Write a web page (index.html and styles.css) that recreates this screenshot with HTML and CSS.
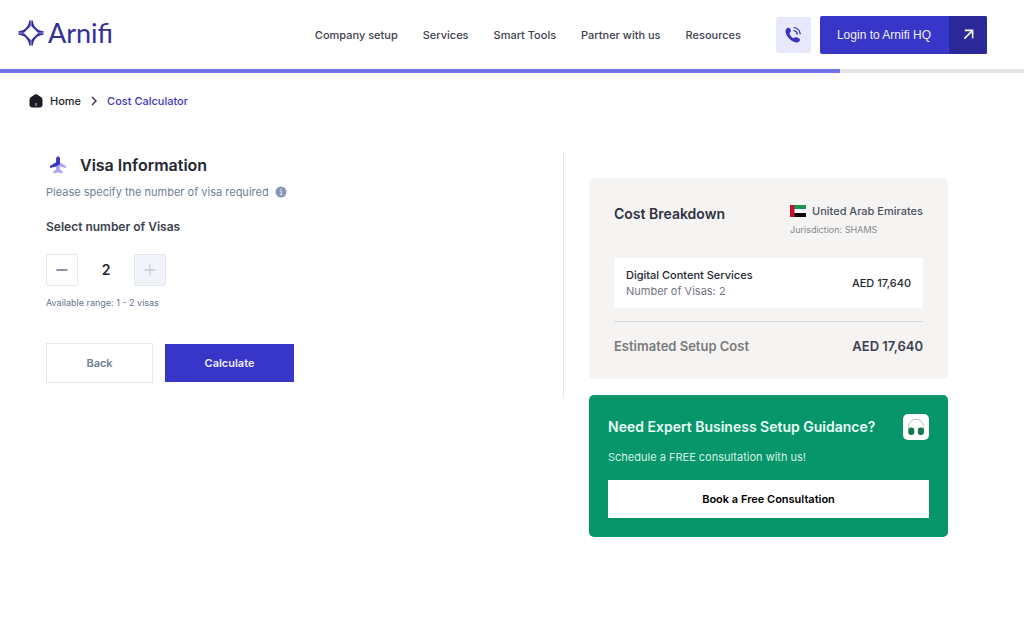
FILE: index.html
```html
<!DOCTYPE html>
<html lang="en">
<head>
<meta charset="utf-8">
<meta name="viewport" content="width=device-width, initial-scale=1">
<title>Arnifi Cost Calculator</title>
<link rel="stylesheet" href="styles.css">
</head>
<body>
<header class="header">
  <a class="logo" href="#" aria-label="Arnifi">
    <svg class="logo-mark" viewBox="0 0 26 26" aria-hidden="true">
      <g fill="#322f9c">
        <path id="ray" d="M12.700 0.500V6Q10.500 9.200 7 10.200L7.500 8.500Q10.500 6 11.200 0.500ZM13.300 0.500V6Q15.500 9.200 19 10.200L18.500 8.500Q15.500 6 14.800 0.500Z"/>
        <use href="#ray" transform="rotate(90 13 13)"/>
        <use href="#ray" transform="rotate(180 13 13)"/>
        <use href="#ray" transform="rotate(270 13 13)"/>
      </g>
    </svg>
    <span class="logo-text">Arnifi</span>
  </a>
  <nav class="nav" aria-label="Main">
    <a href="#">Company setup</a>
    <a href="#">Services</a>
    <a href="#">Smart Tools</a>
    <a href="#">Partner with us</a>
    <a href="#">Resources</a>
  </nav>
  <button class="call" type="button" aria-label="Call us">
    <svg viewBox="0 0 20 20" aria-hidden="true">
      <path d="M3.800 2.200 C5.500 1.300 6.800 2.200 7.400 4.300 C7.900 6 7.300 7.100 6 8 C6.700 10.500 8.500 12.700 10.700 13.700 C11.800 12.400 13 12.100 14.700 12.700 C17.500 13.600 18.500 15 17.300 16.600 C16 18.400 13.500 18.800 10.800 17.600 C6.500 15.700 3 11.600 1.900 7.600 C1.300 5.200 1.900 3.300 3.800 2.200Z" fill="#3936bd"/>
      <path d="M11.300 1.800 A7.500 7.500 0 0 1 18 8.700 M11 5.200 A4.200 4.200 0 0 1 14.700 9" fill="none" stroke="#3936bd" stroke-width="1.500" stroke-linecap="round"/>
    </svg>
  </button>
  <a class="login" href="#">
    <span class="login-text">Login to Arnifi HQ</span>
    <span class="login-arrow">
      <svg viewBox="0 0 12 12" aria-hidden="true"><path d="M2 1.500H10.500V10M10.500 1.500L1.500 10.500" fill="none" stroke="#fff" stroke-width="1.700"/></svg>
    </span>
  </a>
</header>
<div class="progress" role="progressbar" aria-label="Calculator progress" aria-valuenow="82" aria-valuemin="0" aria-valuemax="100"><div class="progress-bar" style="width:82%"></div></div>

<nav class="breadcrumb" aria-label="Breadcrumb">
  <a class="home" href="#">
    <svg viewBox="0 0 14 14" aria-hidden="true"><path d="M5.800 .6Q7 -.1 8.200 .6L12.200 3.200Q13.500 4.200 13.500 5.700V10.500Q13.500 13.500 10.500 13.500H3.500Q.5 13.500 .5 10.500V5.700Q.5 4.200 1.800 3.200Z" fill="#1b1c24"/><path d="M7 9.300V11.300" stroke="#d5d5dc" stroke-width="1" stroke-linecap="round"/></svg>
    Home
  </a>
  <svg class="chevron" viewBox="0 0 8 10" aria-hidden="true"><path d="M2 1L6 5L2 9" fill="none" stroke="#30313a" stroke-width="1.400"/></svg>
  <a class="current" href="#" aria-current="page">Cost Calculator</a>
</nav>

<main class="main">
  <section class="visa">
    <h1 class="visa-title">
      <svg viewBox="0 0 18 18" aria-hidden="true">
        <path d="M9 .5C10.200 .5 10.900 1.700 10.900 3V6.200L16.600 9.700Q17.300 10.500 17 12L10.900 10.600V13.500L13.500 15.500V17.500L9 16.200L4.500 17.500V15.500L7.100 13.500V10.500Z" fill="#aaa4ec"/>
        <path d="M9 .5C10.200 .5 10.900 1.700 10.900 3V8.300L7.100 10.600L1 12Q.7 10.500 1.400 9.700L7.100 6.200V3C7.100 1.700 7.800 .5 9 .5Z" fill="#3936bd"/>
      </svg>
      Visa Information
    </h1>
    <p class="visa-hint">Please specify the number of visa required
      <svg viewBox="0 0 12 12" aria-hidden="true"><circle cx="6" cy="6" r="5.500" fill="#8799b0"/><path d="M5 5.300H6.300V8.500M4.900 8.600H7.500M6 2.900V4.100" fill="none" stroke="#dfe6ee" stroke-width="1"/></svg>
    </p>
    <h2 class="visa-label" id="visa-label">Select number of Visas</h2>
    <div class="stepper" role="group" aria-labelledby="visa-label">
      <button class="step" type="button" aria-label="Decrease"><svg viewBox="0 0 14 14" aria-hidden="true"><path d="M1.500 7H12.500" stroke="#64748b" stroke-width="1.500"/></svg></button>
      <output class="count">2</output>
      <button class="step" type="button" aria-label="Increase" disabled><svg viewBox="0 0 14 14" aria-hidden="true"><path d="M1.500 7H12.500M7 1.500V12.500" stroke="#c3ccda" stroke-width="1.300"/></svg></button>
    </div>
    <p class="range">Available range: 1 - 2 visas</p>
    <div class="actions">
      <button class="back" type="button">Back</button>
      <button class="calculate" type="button">Calculate</button>
    </div>
  </section>

  <aside class="side">
    <section class="cost">
      <div class="cost-head">
        <h2 class="cost-title">Cost Breakdown</h2>
        <div>
          <p class="country">
            <svg viewBox="0 0 16 12" aria-hidden="true"><path fill="#fff" d="M0 0H16V12H0z"/><path fill="#159653" d="M0 0H16V4H0z"/><path fill="#080808" d="M0 8H16V12H0z"/><path fill="#c8102e" d="M0 0H4.500V12H0z"/></svg>
            United Arab Emirates
          </p>
          <p class="jurisdiction">Jurisdiction: SHAMS</p>
        </div>
      </div>
      <div class="item">
        <div>
          <h3 class="item-name">Digital Content Services</h3>
          <p class="item-detail">Number of Visas: 2</p>
        </div>
        <p class="item-price">AED 17,640</p>
      </div>
      <div class="total"><span class="total-label">Estimated Setup Cost</span><span>AED 17,640</span></div>
    </section>
    <section class="expert">
      <div class="expert-head">
        <h2 class="expert-title">Need Expert Business Setup Guidance?</h2>
        <svg viewBox="0 0 26 26" aria-hidden="true"><rect width="26" height="26" rx="5" fill="#fff"/><path d="M5.800 17V12.500A7.300 7.300 0 0 1 20.400 12.500V17" fill="none" stroke="#a9c9bb" stroke-width="1"/><rect x="5.300" y="13.500" width="6" height="7.500" rx="2.700" fill="#16784f"/><rect x="14.900" y="13.500" width="6" height="7.500" rx="2.700" fill="#16784f"/></svg>
      </div>
      <p class="expert-text">Schedule a FREE consultation with us!</p>
      <button class="book" type="button">Book a Free Consultation</button>
    </section>
  </aside>
</main>
</body>
</html>
```

FILE: styles.css
```css
* { box-sizing: border-box; }
body { margin: 0; background: #fff; color: #23262f; font: 500 11px/16px Inter, "Liberation Sans", sans-serif; }
h1, h2, h3, p { margin: 0; }
a { color: inherit; text-decoration: none; }
button { font: inherit; padding: 0; cursor: pointer; }
svg { display: block; flex: none; }

.header { display: flex; align-items: center; height: 69px; padding: 0 37px 0 18px; }
.logo { display: flex; align-items: center; gap: 4px; margin-right: auto; padding-bottom: 4px; color: #322f9c; }
.logo-mark { width: 26px; height: 26px; }
.logo-text { font: 400 27px/32px Lato, sans-serif; }
.nav { display: flex; gap: 25px; color: #41414f; }
.call { display: grid; place-items: center; width: 35px; height: 36px; margin: 0 9px 0 35px; border: 0; border-radius: 3px; background: #e8e8fc; }
.call svg { width: 18px; height: 18px; }
.login { display: flex; height: 38px; border-radius: 2px; overflow: hidden; background: #3835c9; color: #f0f0ff; }
.login-text { display: flex; align-items: center; padding: 0 18px 0 17px; font: 400 12px/16px "Liberation Sans", Arial, sans-serif; }
.login-arrow { display: grid; place-items: center; width: 38px; background: #2b2999; }
.login-arrow svg { width: 11px; height: 11px; }

.progress { height: 4px; background: #e5e5e9; }
.progress-bar { height: 100%; background: #7571ec; }

.breadcrumb { display: flex; align-items: center; gap: 9px; padding: 20px 29px 0; }
.home { display: flex; align-items: center; gap: 7px; }
.home svg { width: 14px; height: 14px; }
.chevron { width: 8px; height: 10px; }
.current { color: #3d39c0; }

.main { display: grid; grid-template-columns: 518px minmax(0, 1fr); padding: 44px 76px 24px 46px; }
.visa { border-right: 1px solid #e5e7eb; padding-bottom: 15px; align-self: start; }
.visa-title { display: flex; align-items: center; gap: 13px; padding-left: 3px; font-size: 16px; line-height: 24px; font-weight: 600; }
.visa-title svg { width: 18px; height: 18px; }
.visa-hint { display: flex; align-items: center; gap: 6px; margin-top: 7px; color: #718096; font-weight: 400; }
.visa-hint svg { width: 12px; height: 12px; }
.visa-label { margin-top: 17px; color: #3b4250; font-size: 12px; line-height: 20px; font-weight: 600; }
.stepper { display: flex; align-items: center; margin-top: 17px; }
.step { display: grid; place-items: center; width: 32px; height: 32px; border: 1px solid #e2e8f0; border-radius: 2px; background: #fff; }
.step:disabled { background: #f1f5f9; cursor: default; }
.step svg { width: 14px; height: 14px; }
.count { width: 56px; text-align: center; font-size: 14px; font-weight: 600; }
.range { margin-top: 9px; color: #64748b; font-size: 9px; font-weight: 400; }
.actions { display: flex; gap: 12px; margin-top: 32px; }
.back, .calculate { height: 40px; font-weight: 600; }
.back { width: 107px; border: 1px solid #e5e7eb; background: #fff; color: #718096; }
.calculate { width: 129px; border: 1px solid #fff; border-width: 1px 0; background: #3835c9; color: #eeeeff; }

.side { padding: 25px 0 0 25px; }
.cost { padding: 24px 25px 23px; border-radius: 5px; background: #f5f4f3; }
.cost-head { display: flex; justify-content: space-between; align-items: flex-start; }
.cost-title { color: #2d3142; font-size: 14px; line-height: 24px; font-weight: 600; }
.country { display: flex; align-items: center; gap: 6px; line-height: 18px; color: #4b5160; }
.country svg { width: 16px; height: 12px; }
.jurisdiction { margin-top: 2px; color: #858891; font-size: 9px; font-weight: 400; }
.item { display: flex; align-items: center; justify-content: space-between; margin-top: 20px; padding: 9px 12px; border-radius: 2px; background: #fff; }
.item-name { font-size: 11px; font-weight: 500; }
.item-detail { color: #73767f; font-weight: 400; }
.total { display: flex; justify-content: space-between; margin-top: 13px; padding-top: 14px; border-top: 1px solid #d8d8d8; color: #3d4050; font-size: 13px; line-height: 20px; font-weight: 600; }
.total-label { color: #7a7a7a; }
.expert { margin-top: 16px; padding: 19px; border-radius: 5px; background: #079669; color: #e9fff7; }
.expert-head { display: flex; align-items: center; justify-content: space-between; }
.expert-head svg { width: 26px; height: 26px; }
.expert-title { font-size: 14px; line-height: 24px; font-weight: 600; }
.expert-text { margin: 9px 0 15px; color: #d3f3e6; font-weight: 400; }
.book { display: block; width: 100%; height: 38px; border: 0; background: #fff; color: #000; font-weight: 600; }
```
